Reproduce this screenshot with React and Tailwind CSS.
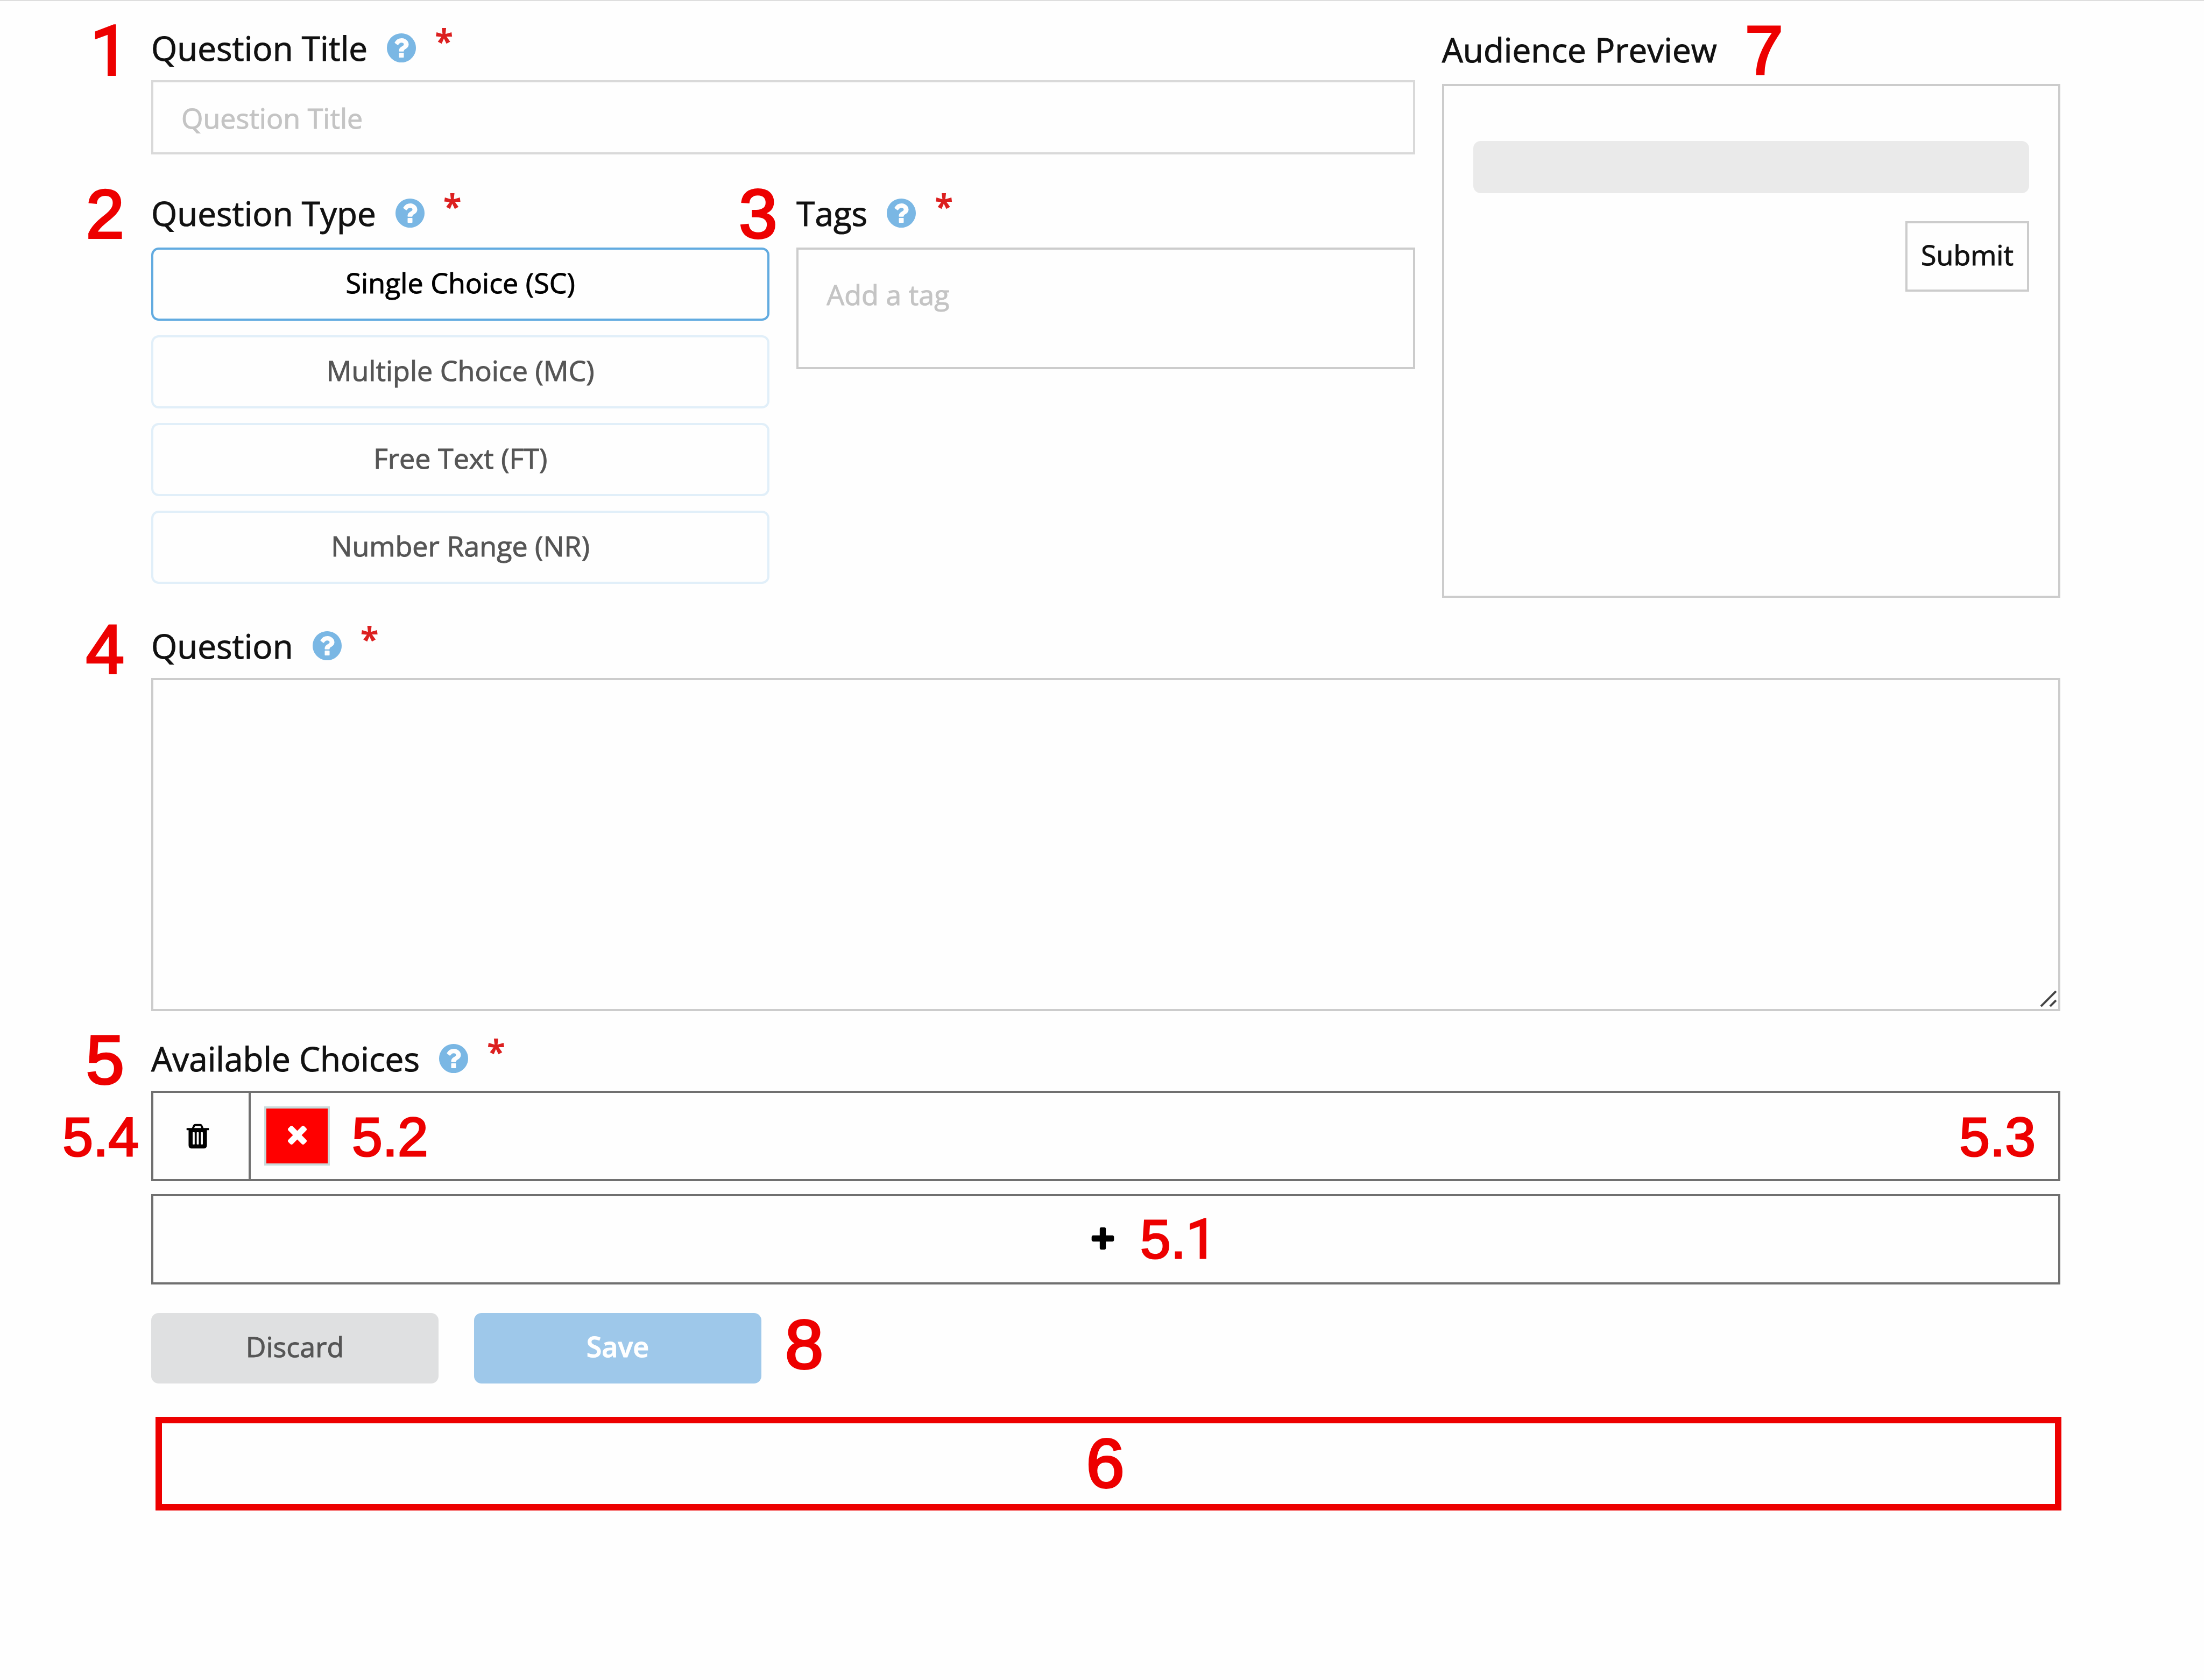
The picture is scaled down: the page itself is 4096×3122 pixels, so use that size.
import React from "react";

function HelpIcon() {
  return (
    <svg viewBox="128 128 1536 1536" className="h-[54px] w-[54px]" fill="currentColor" aria-hidden="true">
      <path d="M1024 1376v-192q0-14-9-23t-23-9h-192q-14 0-23 9t-9 23v192q0 14 9 23t23 9h192q14 0 23-9t9-23zm256-672q0-88-55.5-163t-138.5-116-170-41q-243 0-371 213-15 24 8 42l132 100q7 6 19 6 16 0 25-12 53-68 86-92 34-24 86-24 48 0 85.5 26t37.5 59q0 38-20 61t-68 45q-63 28-115.5 86.5t-52.5 125.5v36q0 14 9 23t23 9h192q14 0 23-9t9-23q0-19 21.5-49.5t54.5-49.5q32-18 49-28.5t46-35 44.5-48 28-60.5 12.5-81zm384 192q0 209-103 385.5t-279.5 279.5-385.5 103-385.5-103-279.5-279.5-103-385.5 103-385.5 279.5-279.5 385.5-103 385.5 103 279.5 279.5 103 385.5z" />
    </svg>
  );
}

function TrashIcon() {
  return (
    <svg viewBox="0 0 1792 1792" className="h-[53px] w-[53px]" fill="currentColor" aria-hidden="true">
      <path d="M704 1376v-704q0-14-9-23t-23-9h-64q-14 0-23 9t-9 23v704q0 14 9 23t23 9h64q14 0 23-9t9-23zm256 0v-704q0-14-9-23t-23-9h-64q-14 0-23 9t-9 23v704q0 14 9 23t23 9h64q14 0 23-9t9-23zm256 0v-704q0-14-9-23t-23-9h-64q-14 0-23 9t-9 23v704q0 14 9 23t23 9h64q14 0 23-9t9-23zm-544-992h448l-48-117q-7-9-17-11h-317q-10 2-17 11zm928 32v64q0 14-9 23t-23 9h-96v948q0 83-47 143.5t-113 60.5h-832q-66 0-113-58.5t-47-141.5v-952h-96q-14 0-23-9t-9-23v-64q0-14 9-23t23-9h309l70-167q15-37 54-63t79-26h320q40 0 79 26t54 63l70 167h309q14 0 23 9t9 23z" />
    </svg>
  );
}

function CrossIcon() {
  return (
    <svg viewBox="0 64 1792 1792" className="h-[53px] w-[53px]" fill="currentColor" aria-hidden="true">
      <path d="M1490 1322q0 40-28 68l-136 136q-28 28-68 28t-68-28l-294-294-294 294q-28 28-68 28t-68-28l-136-136q-28-28-28-68t28-68l294-294-294-294q-28-28-28-68t28-68l136-136q28-28 68-28t68 28l294 294 294-294q28-28 68-28t68 28l136 136q28 28 28 68t-28 68l-294 294 294 294q28 28 28 68z" />
    </svg>
  );
}

function PlusIcon() {
  return (
    <svg viewBox="0 -64 1792 1792" className="h-[53px] w-[53px]" fill="currentColor" aria-hidden="true">
      <path d="M1600 736v192q0 40-28 68t-68 28h-416v416q0 40-28 68t-68 28h-192q-40 0-68-28t-28-68v-416h-416q-40 0-68-28t-28-68v-192q0-40 28-68t68-28h416v-416q0-40 28-68t68-28h192q40 0 68 28t28 68v416h416q40 0 68 28t28 68z" />
    </svg>
  );
}

function Marker({ children, small = false, className = "" }) {
  const size = small
    ? "text-[102px] [-webkit-text-stroke:3px_#ed0000]"
    : "text-[128px] [-webkit-text-stroke:4px_#ed0000]";
  return (
    <span
      className={`pointer-events-none whitespace-nowrap font-['Liberation_Sans',Arial,sans-serif] leading-none text-[#ed0000] ${size} ${className}`}
    >
      {children}
    </span>
  );
}

/* The digit one without a foot serif. */
function PlainOne() {
  return <span className="font-['Roboto',sans-serif]">1</span>;
}

function FieldLabel({ as: Tag = "label", id, htmlFor, text, help = true, marker, markerClass, className = "mb-[18px]" }) {
  return (
    <div className={`relative flex h-[88px] items-center pt-1 ${className}`}>
      {marker && <Marker className={`absolute ${markerClass}`}>{marker}</Marker>}
      <Tag
        id={id}
        htmlFor={htmlFor}
        className="text-[62px] leading-[84px] whitespace-nowrap text-[#111] [-webkit-text-stroke:1px_#111]"
      >
        {text}
      </Tag>
      {help && (
        <>
          <button type="button" aria-label={`Help: ${text}`} className="ml-[36px] text-[#7ab7e4]">
            <HelpIcon />
          </button>
          <span aria-hidden="true" className="ml-[35px] self-start text-[62px] leading-[58px] font-bold text-[#dc2020]">
            *
          </span>
        </>
      )}
    </div>
  );
}

const questionTypes = ["Single Choice (SC)", "Multiple Choice (MC)", "Free Text (FT)", "Number Range (NR)"];

export default function App() {
  const [type, setType] = React.useState(questionTypes[0]);
  return (
    <main className="min-h-screen border-t-2 border-[#dedede] bg-[#fefefe] pt-[41px] pr-[267px] pb-16 pl-[281px] font-['Open_Sans',sans-serif] text-[52px] leading-[76px]">
      <div className="grid grid-cols-3 gap-x-[50px]">
        <div className="col-span-2">
          <FieldLabel
            htmlFor="title"
            text="Question Title"
            marker={<PlainOne />}
            markerClass="right-full top-[-12px] mr-[41px]"
          />
          <input
            id="title"
            type="text"
            placeholder="Question Title"
            className="block h-[138px] w-full border-4 border-[#d9d9d9] bg-transparent px-[52px] placeholder:text-[#c4c4c4] placeholder:opacity-100 placeholder:[-webkit-text-stroke:1px_#c4c4c4]"
          />
          <div className="mt-[63px] grid grid-cols-2 gap-x-[50px]">
            <div>
              <FieldLabel
                as="h2"
                id="type-label"
                text="Question Type"
                marker="2"
                markerClass="right-full top-[-16px] mr-[50px]"
                className="mb-[22px]"
              />
              <div role="group" aria-labelledby="type-label" className="flex flex-col gap-[27px]">
                {questionTypes.map((name) => (
                  <button
                    key={name}
                    type="button"
                    aria-pressed={type === name}
                    onClick={() => setType(name)}
                    className={`h-[136px] rounded-[14px] border-4 pb-[6px] ${
                      type === name
                        ? "border-[#62abe0] text-black [-webkit-text-stroke:1px_black]"
                        : "border-[#e1eff9] text-[#555] [-webkit-text-stroke:1px_#555]"
                    }`}
                  >
                    {name}
                  </button>
                ))}
              </div>
            </div>
            <div>
              <FieldLabel
                htmlFor="tags"
                text="Tags"
                marker="3"
                markerClass="right-full top-[-16px] mr-[36px]"
                className="mb-[22px]"
              />
              <div className="h-[226px] border-4 border-[#ccc] px-[52px] pt-[42px]">
                <input
                  id="tags"
                  type="text"
                  placeholder="Add a tag"
                  className="block h-[80px] w-full bg-transparent placeholder:text-[#c4c4c4] placeholder:opacity-100 placeholder:[-webkit-text-stroke:1px_#c4c4c4]"
                />
              </div>
            </div>
          </div>
        </div>

        <section aria-labelledby="preview-label" className="flex flex-col pt-[3px]">
          <FieldLabel
            as="h2"
            id="preview-label"
            text="Audience Preview"
            help={false}
            marker="7"
            markerClass="left-[563px] top-[-16px]"
            className="mb-[22px]"
          />
          <div className="flex h-[955px] flex-col items-end border-4 border-[#ccc] px-[54px] pt-[102px]">
            <div className="h-[97px] w-full rounded-[14px] bg-[#eaeaea]" />
            <button
              type="button"
              className="mt-[52px] h-[131px] w-[230px] border-4 border-[#ccc] pb-[8px] text-[#111] [-webkit-text-stroke:1px_#111]"
            >
              Submit
            </button>
          </div>
        </section>
      </div>

      <div className="mt-[43px]">
        <FieldLabel htmlFor="question" text="Question" marker="4" markerClass="right-full top-[-11px] mr-[50px]" />
        <div className="relative">
          <textarea
            id="question"
            className="block h-[619px] w-full resize-none border-4 border-[#ccc] bg-transparent px-[52px] py-6"
          />
          <svg
            viewBox="0 0 30 30"
            className="pointer-events-none absolute right-[7px] bottom-[8px] h-[30px] w-[30px]"
            fill="none"
            stroke="#444"
            strokeWidth="4"
            aria-hidden="true"
          >
            <path d="M1 29 29 1M18 29 29 18" />
          </svg>
        </div>
      </div>

      <div className="mt-[42px]">
        <FieldLabel
          htmlFor="choice"
          text="Available Choices"
          marker="5"
          markerClass="right-full top-[-15px] mr-[50px]"
        />
        <div className="relative flex h-[168px] items-center border-4 border-[#707070]">
          <Marker small className="absolute top-[31px] right-full mr-[27px]">5.4</Marker>
          <button
            type="button"
            aria-label="Delete choice"
            className="flex h-full w-[181px] items-center justify-center border-r-4 border-[#707070] pr-3"
          >
            <TrashIcon />
          </button>
          <button
            type="button"
            aria-label="Mark choice as correct"
            className="ml-[25px] flex h-[110px] w-[122px] items-center justify-center border-4 border-[#c9dada] bg-[red] pb-1 text-white"
          >
            <CrossIcon />
          </button>
          <input id="choice" type="text" className="h-full min-w-0 flex-1 bg-transparent px-[52px]" />
          <Marker small className="absolute top-[31px] left-[369px]">5.2</Marker>
          <Marker small className="absolute top-[31px] right-[42px]">5.3</Marker>
        </div>
        <div className="relative mt-6 flex h-[168px]">
          <button
            type="button"
            aria-label="Add choice"
            className="flex flex-1 items-center justify-center border-4 border-[#707070] pr-3 pb-1"
          >
            <PlusIcon />
          </button>
          <Marker small className="absolute top-[33px] left-1/2 ml-[64px]">
            5.<PlainOne />
          </Marker>
        </div>
      </div>

      <div className="mt-[53px] flex h-[131px]">
        <button
          type="button"
          className="w-[534px] rounded-[14px] bg-[#dfe0e1] pb-[7px] text-[#555] [-webkit-text-stroke:1px_#555]"
        >
          Discard
        </button>
        <button
          type="button"
          className="ml-[66px] w-[534px] rounded-[14px] bg-[#9ec8ea] pb-[7px] font-semibold text-white [-webkit-text-stroke:1px_white]"
        >
          Save
        </button>
        <Marker className="-mt-[5px] ml-[44px]">8</Marker>
      </div>

      <div className="mt-[62px] -mr-[2px] ml-2 flex h-[174px] items-center justify-center border-[12px] border-[#ed0000] pr-3">
        <Marker>6</Marker>
      </div>
    </main>
  );
}
